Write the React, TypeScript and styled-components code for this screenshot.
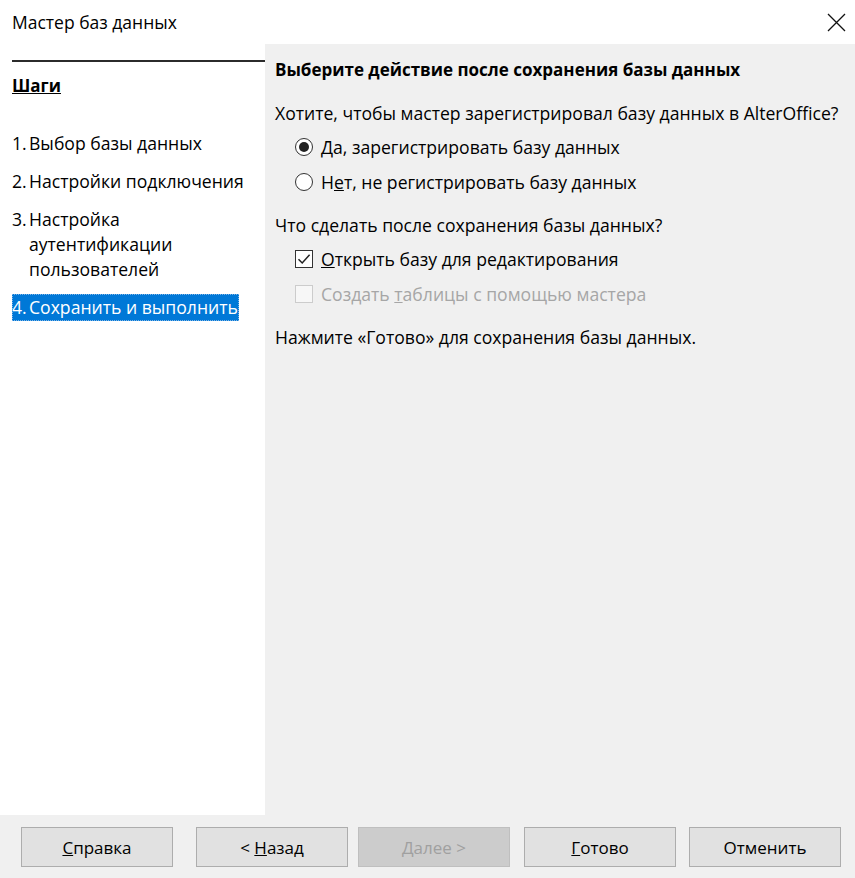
import React from "react";
import styled, { createGlobalStyle } from "styled-components";

const GlobalStyle = createGlobalStyle`
  html, body {
    margin: 0;
    padding: 0;
    background: #ffffff;
  }
  body {
    font-family: "Open Sans", "Noto Sans", sans-serif;
    color: #000;
  }
`;

const Window = styled.div`
  width: 855px;
  height: 878px;
  display: flex;
  flex-direction: column;
  background: #fff;
`;

const TitleBar = styled.div`
  height: 44px;
  display: flex;
  align-items: center;
  justify-content: space-between;
  padding: 0 4px 0 12px;
  font-size: 17.5px;
`;

const CloseButton = styled.div`
  width: 30px;
  height: 30px;
  display: flex;
  align-items: center;
  justify-content: center;
`;

const Body = styled.div`
  flex: 1;
  display: flex;
`;

const Sidebar = styled.div`
  width: 253px;
  padding: 16px 0 0 12px;
  background: #fff;
  display: flex;
  flex-direction: column;
`;

const SideRule = styled.div`
  height: 2px;
  background: #2b2b2b;
`;

const StepsTitle = styled.div`
  margin-top: 12px;
  font-size: 17px;
  font-weight: 700;
  text-decoration: underline;
  line-height: 24px;
`;

const StepList = styled.div`
  margin-top: 33px;
  display: flex;
  flex-direction: column;
  align-items: flex-start;
  gap: 13px;
`;

const Step = styled.div<{ $active?: boolean }>`
  display: flex;
  font-size: 17.6px;
  line-height: 25px;
  padding: ${(p) => (p.$active ? "1px 1px 1px 0" : "0")};
  margin: ${(p) => (p.$active ? "-1px 0" : "0")};
  box-sizing: border-box;
  background: ${(p) => (p.$active ? "#0078d7" : "transparent")};
  color: ${(p) => (p.$active ? "#fff" : "#000")};
  outline: ${(p) => (p.$active ? "1px dotted #7fb4e6" : "none")};
  outline-offset: -1px;
  white-space: nowrap;
`;

const StepNum = styled.span`
  flex: none;
  width: 17px;
`;

const Content = styled.div`
  flex: 1;
  background: #f0f0f0;
  padding: 13px 10px 0 10px;
  display: flex;
  flex-direction: column;
`;

const Heading = styled.div`
  font-size: 17px;
  font-weight: 700;
  line-height: 26px;
`;

const Label = styled.div<{ $gap: number }>`
  margin-top: ${(p) => p.$gap}px;
  font-size: 17.6px;
  line-height: 26px;
  white-space: nowrap;
`;

const OptionGroup = styled.div`
  margin-top: 8px;
  padding-left: 20px;
  display: flex;
  flex-direction: column;
  gap: 9px;
`;

const Option = styled.div<{ $disabled?: boolean }>`
  display: flex;
  align-items: center;
  gap: 8px;
  font-size: 17.6px;
  line-height: 26px;
  color: ${(p) => (p.$disabled ? "#a6a6a6" : "#000")};
`;

const Radio = styled.span<{ $checked?: boolean }>`
  width: 18px;
  height: 18px;
  box-sizing: border-box;
  border: 1.5px solid #333;
  border-radius: 50%;
  background: #fff;
  display: flex;
  align-items: center;
  justify-content: center;
  &::after {
    content: "";
    width: 10px;
    height: 10px;
    border-radius: 50%;
    background: ${(p) => (p.$checked ? "#222" : "transparent")};
  }
`;

const Check = styled.span<{ $disabled?: boolean }>`
  width: 18px;
  height: 18px;
  box-sizing: border-box;
  border: 1.5px solid ${(p) => (p.$disabled ? "#cccccc" : "#333")};
  background: ${(p) => (p.$disabled ? "#f7f7f7" : "#fff")};
  display: flex;
  align-items: center;
  justify-content: center;
`;

const Footer = styled.div`
  height: 63px;
  background: #f0f0f0;
  padding: 12px 0 0 21px;
  box-sizing: border-box;
  display: flex;
  align-items: flex-start;
`;

const Button = styled.div<{ $gap: number; $disabled?: boolean }>`
  margin-left: ${(p) => p.$gap}px;
  width: 152px;
  height: 40px;
  box-sizing: border-box;
  border: 1px solid ${(p) => (p.$disabled ? "#bfbfbf" : "#adadad")};
  background: ${(p) => (p.$disabled ? "#cccccc" : "#e1e1e1")};
  color: ${(p) => (p.$disabled ? "#a0a0a0" : "#000")};
  display: flex;
  align-items: center;
  justify-content: center;
  font-size: 17px;
`;

const U = styled.span`
  text-decoration: underline;
`;

export default function App() {
  return (
    <>
      <GlobalStyle />
      <Window>
        <TitleBar>
          <span>Мастер баз данных</span>
          <CloseButton>
            <svg width="19" height="19" viewBox="0 0 19 19">
              <path d="M1 1L18 18M18 1L1 18" stroke="#111" strokeWidth="1.3" fill="none" />
            </svg>
          </CloseButton>
        </TitleBar>
        <Body>
          <Sidebar>
            <SideRule />
            <StepsTitle>Шаги</StepsTitle>
            <StepList>
              <Step>
                <StepNum>1.</StepNum>
                <span>Выбор базы данных</span>
              </Step>
              <Step>
                <StepNum>2.</StepNum>
                <span>Настройки подключения</span>
              </Step>
              <Step>
                <StepNum>3.</StepNum>
                <span>
                  Настройка
                  <br />
                  аутентификации
                  <br />
                  пользователей
                </span>
              </Step>
              <Step $active>
                <StepNum>4.</StepNum>
                <span>Сохранить и выполнить</span>
              </Step>
            </StepList>
          </Sidebar>
          <Content>
            <Heading>Выберите действие после сохранения базы данных</Heading>
            <Label $gap={17}>Хотите, чтобы мастер зарегистрировал базу данных в AlterOffice?</Label>
            <OptionGroup>
              <Option>
                <Radio $checked />
                <span>
                  <U>Д</U>а, зарегистрировать базу данных
                </span>
              </Option>
              <Option>
                <Radio />
                <span>
                  Н<U>е</U>т, не регистрировать базу данных
                </span>
              </Option>
            </OptionGroup>
            <Label $gap={17}>Что сделать после сохранения базы данных?</Label>
            <OptionGroup>
              <Option>
                <Check>
                  <svg width="14" height="14" viewBox="0 0 14 14">
                    <path d="M1.5 7.2L5.2 11L12.6 2.8" stroke="#222" strokeWidth="1.5" fill="none" />
                  </svg>
                </Check>
                <span>
                  <U>О</U>ткрыть базу для редактирования
                </span>
              </Option>
              <Option $disabled>
                <Check $disabled />
                <span>
                  Создать <U>т</U>аблицы с помощью мастера
                </span>
              </Option>
            </OptionGroup>
            <Label $gap={17}>Нажмите «Готово» для сохранения базы данных.</Label>
          </Content>
        </Body>
        <Footer>
          <Button $gap={0}>
            <span>
              <U>С</U>правка
            </span>
          </Button>
          <Button $gap={23}>
            <span>
              &lt; <U>Н</U>азад
            </span>
          </Button>
          <Button $gap={10} $disabled>
            <span>
              <U>Д</U>алее &gt;
            </span>
          </Button>
          <Button $gap={14}>
            <span>
              <U>Г</U>отово
            </span>
          </Button>
          <Button $gap={13}>
            <span>Отменить</span>
          </Button>
        </Footer>
      </Window>
    </>
  );
}
